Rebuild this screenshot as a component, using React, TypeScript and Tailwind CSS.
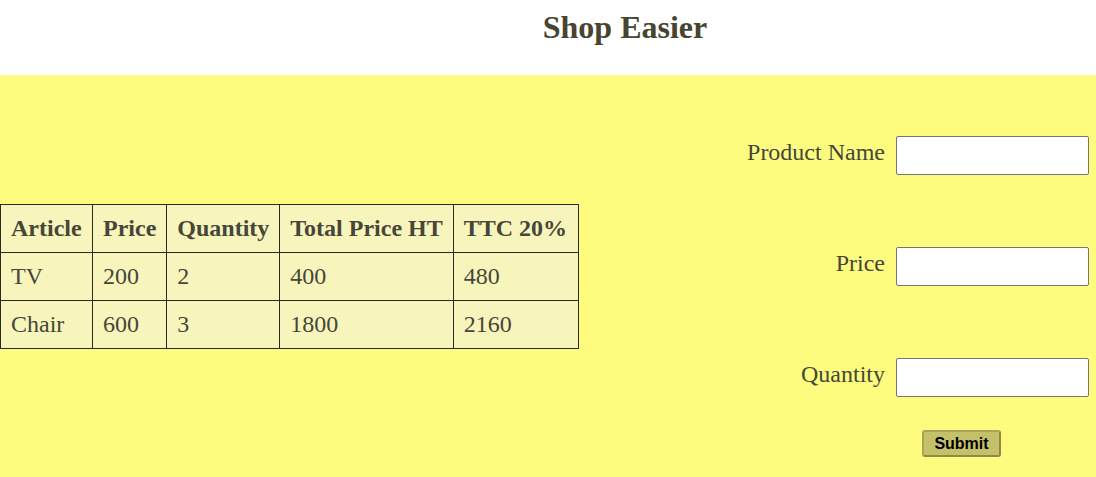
const ROWS = [
  ["TV", "200", "2", "400", "480"],
  ["Chair", "600", "3", "1800", "2160"],
];

const HEADS = ["Article", "Price", "Quantity", "Total Price HT", "TTC 20%"];
const WIDTHS = ["w-[92px]", "w-[74px]", "w-[113px]", "w-[173px]", "w-[125px]"];

const FIELDS = ["Product Name", "Price", "Quantity"];

export default function App() {
  return (
    <div className="min-h-screen bg-white font-['Liberation_Serif',serif] text-[#46463a]">
      {/* Header */}
      <header className="h-[75px] flex justify-center pt-[9px]">
        <h1 className="ml-[154px] text-[32px] leading-[37px] font-bold text-[#47452f]">
          Shop Easier
        </h1>
      </header>

      {/* Main */}
      <main className="h-[402px] bg-[#fdfc7f] flex justify-between">
        <table className="self-start mt-[129px] border-collapse bg-[#f7f5bb] text-[24px] leading-[27px]">
          <thead>
            <tr>
              {HEADS.map((h, i) => (
                <th
                  key={h}
                  className={`${WIDTHS[i]} border border-[#2a2a22] px-[10px] py-[10px] text-left font-bold whitespace-nowrap`}
                >
                  {h}
                </th>
              ))}
            </tr>
          </thead>
          <tbody>
            {ROWS.map((row) => (
              <tr key={row[0]}>
                {row.map((c, i) => (
                  <td
                    key={i}
                    className={`${WIDTHS[i]} border border-[#2a2a22] px-[10px] py-[10px] whitespace-nowrap`}
                  >
                    {c}
                  </td>
                ))}
              </tr>
            ))}
          </tbody>
        </table>

        <form className="flex flex-col items-end pt-[61px] pr-[7px]">
          <div className="flex flex-col items-end gap-[72px]">
            {FIELDS.map((f) => (
              <label key={f} className="flex items-center gap-[11px] text-[24px] leading-[27px]">
                <span className="-mt-[6px]">{f}</span>
                <input
                  type="text"
                  className="w-[193px] h-[39px] bg-white border border-[#767676] rounded-[2px]"
                />
              </label>
            ))}
          </div>
          <button
            type="button"
            className="mt-[33px] mr-[88px] w-[79px] h-[27px] bg-[#c5c16b] border-2 border-[#a9a558] border-b-[#8f8b45] border-r-[#8f8b45] rounded-[3px] font-['Liberation_Sans',sans-serif] font-bold text-[16px] leading-none text-black"
          >
            Submit
          </button>
        </form>
      </main>
    </div>
  );
}
